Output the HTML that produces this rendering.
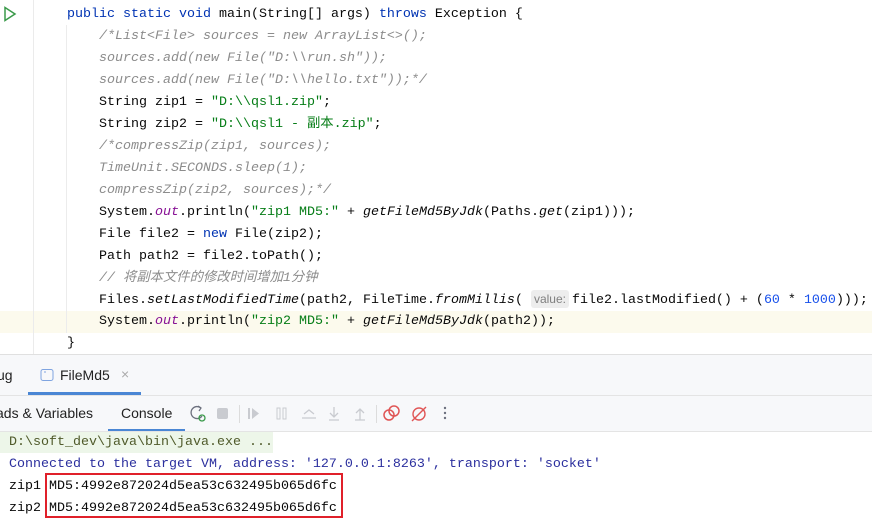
<!DOCTYPE html>
<html><head><meta charset="utf-8"><style>
*{margin:0;padding:0;box-sizing:border-box}
body{width:872px;height:519px;overflow:hidden;background:#fff;position:relative;font-family:"Liberation Mono","Noto Sans CJK SC",monospace;}
.l{position:absolute;left:67px;height:22px;line-height:22px;font-size:13.33px;white-space:pre;color:#080808}
.i{left:99px}
.c{color:#8c8c8c;font-style:italic}
.k{color:#0033b3}
.s{color:#067d17}
.f{color:#871094;font-style:italic}
.m{font-style:italic}
.n{color:#1750eb}
.hint{display:inline-block;background:#ededed;color:#808080;font-family:"Liberation Sans",sans-serif;font-size:12px;font-style:normal;border-radius:3px;padding:0 3px;line-height:18px;margin-right:3px}
.ui{position:absolute;font-family:"Liberation Sans",sans-serif;font-size:14px;color:#222}
.cl{position:absolute;left:9px;height:22px;line-height:22px;font-size:13.33px;white-space:pre;color:#080808}
</style></head><body>
<div style="position:absolute;left:0;top:311px;width:872px;height:22px;background:#fcfaed"></div>
<div style="position:absolute;left:33px;top:0;width:1px;height:354px;background:#ebebeb"></div>
<div style="position:absolute;left:66px;top:25px;width:1px;height:308px;background:#ececec"></div>
<svg style="position:absolute;left:3px;top:6px" width="14" height="16"><path d="M2 1.5 L12 8 L2 14.5 Z" fill="none" stroke="#3a9a4a" stroke-width="1.5"/></svg>
<div class="l" style="top:4px"><span class="k">public static void</span> main(String[] args) <span class="k">throws</span> Exception {</div>
<div class="l i c" style="top:26px">/*List&lt;File&gt; sources = new ArrayList&lt;&gt;();</div>
<div class="l i c" style="top:48px">sources.add(new File("D:\\run.sh"));</div>
<div class="l i c" style="top:70px">sources.add(new File("D:\\hello.txt"));*/</div>
<div class="l i" style="top:92px">String zip1 = <span class="s">"D:\\qsl1.zip"</span>;</div>
<div class="l i" style="top:114px">String zip2 = <span class="s">"D:\\qsl1 - 副本.zip"</span>;</div>
<div class="l i c" style="top:136px">/*compressZip(zip1, sources);</div>
<div class="l i c" style="top:158px">TimeUnit.SECONDS.sleep(1);</div>
<div class="l i c" style="top:180px">compressZip(zip2, sources);*/</div>
<div class="l i" style="top:202px">System.<span class="f">out</span>.println(<span class="s">"zip1 MD5:"</span> + <span class="m">getFileMd5ByJdk</span>(Paths.<span class="m">get</span>(zip1)));</div>
<div class="l i" style="top:224px">File file2 = <span class="k">new</span> File(zip2);</div>
<div class="l i" style="top:246px">Path path2 = file2.toPath();</div>
<div class="l i c" style="top:268px">// 将副本文件的修改时间增加1分钟</div>
<div class="l i" style="top:290px">Files.<span class="m">setLastModifiedTime</span>(path2, FileTime.<span class="m">fromMillis</span>( <span class="hint">value:</span>file2.lastModified() + (<span class="n">60</span> * <span class="n">1000</span>)));</div>
<div class="l i" style="top:311px">System.<span class="f">out</span>.println(<span class="s">"zip2 MD5:"</span> + <span class="m">getFileMd5ByJdk</span>(path2));</div>
<div class="l" style="top:333px">}</div>

<div style="position:absolute;left:0;top:354px;width:872px;height:165px;background:#f7f8fa;border-top:1px solid #e0e0e0"></div>
<div class="ui" style="left:-3px;top:367px">ug</div>
<svg style="position:absolute;left:40px;top:368px" width="14" height="14"><rect x="1" y="1.5" width="12" height="11" rx="2" fill="none" stroke="#7fa4e0"/><path d="M4 4h2" stroke="#7fa4e0"/></svg>
<div class="ui" style="left:60px;top:367px">FileMd5</div>
<div class="ui" style="left:121px;top:366px;color:#aaa;font-size:14px">×</div>
<div style="position:absolute;left:28px;top:392px;width:113px;height:3px;background:#4a86d4"></div>
<div style="position:absolute;left:0;top:395px;width:872px;height:1px;background:#e4e4e4"></div>
<div class="ui" style="left:-4px;top:405px">ads &amp; Variables</div>
<div class="ui" style="left:121px;top:405px">Console</div>
<div style="position:absolute;left:108px;top:429px;width:77px;height:2px;background:#4a86d4"></div>
<svg style="position:absolute;left:188px;top:403px" width="270" height="22">
<path d="M13 5a6 6 0 1 0 1 8" fill="none" stroke="#6c707e" stroke-width="1.3"/><path d="M10 3l3 2-2 3" fill="none" stroke="#6c707e" stroke-width="1.2"/><circle cx="14" cy="15" r="3" fill="none" stroke="#3a9a4a" stroke-width="1.3"/>
<rect x="29" y="5" width="11" height="11" rx="2" fill="#c9cbd0"/>
<rect x="51" y="2" width="1" height="18" fill="#dcdcdc"/>
<rect x="60" y="5" width="2" height="11" fill="#c9cbd0"/><path d="M64 5l7 5.5-7 5.5z" fill="#c9cbd0"/>
<rect x="89" y="5" width="3" height="11" fill="none" stroke="#c9cbd0"/><rect x="95" y="5" width="3" height="11" fill="none" stroke="#c9cbd0"/>
<path d="M116 11l5-4 5 4M114 15h14" fill="none" stroke="#c9cbd0" stroke-width="1.3"/>
<path d="M146 4v10M142 10l4 4 4-4M141 17h10" fill="none" stroke="#c9cbd0" stroke-width="1.3"/>
<path d="M172 17V6M168 10l4-4 4 4M167 17h10" fill="none" stroke="#c9cbd0" stroke-width="1.3"/>
<rect x="188" y="2" width="1" height="18" fill="#dcdcdc"/>
<circle cx="201" cy="12" r="5" fill="none" stroke="#e05555" stroke-width="1.5"/><circle cx="206" cy="8" r="5" fill="none" stroke="#e05555" stroke-width="1.5"/>
<circle cx="231" cy="11" r="6" fill="none" stroke="#e05555" stroke-width="1.4"/><path d="M224 18l14-14" stroke="#e05555" stroke-width="1.4"/>
<circle cx="257" cy="5" r="1.2" fill="#6c707e"/><circle cx="257" cy="10" r="1.2" fill="#6c707e"/><circle cx="257" cy="15" r="1.2" fill="#6c707e"/>
</svg>
<div style="position:absolute;left:0;top:431px;width:872px;height:88px;background:#fff;border-top:1px solid #e4e4e4"></div>
<div style="position:absolute;left:0;top:432px;width:273px;height:21px;background:#edf6e9"></div>
<div class="cl" style="top:432px;color:#4f5a2a">D:\soft_dev\java\bin\java.exe ...</div>
<div class="cl" style="top:454px;color:#2b2f9e">Connected to the target VM, address: '127.0.0.1:8263', transport: 'socket'</div>
<div class="cl" style="top:476px">zip1 MD5:4992e872024d5ea53c632495b065d6fc</div>
<div class="cl" style="top:498px">zip2 MD5:4992e872024d5ea53c632495b065d6fc</div>
<div style="position:absolute;left:45px;top:473px;width:298px;height:45px;border:2px solid #e0202a"></div>
</body></html>
